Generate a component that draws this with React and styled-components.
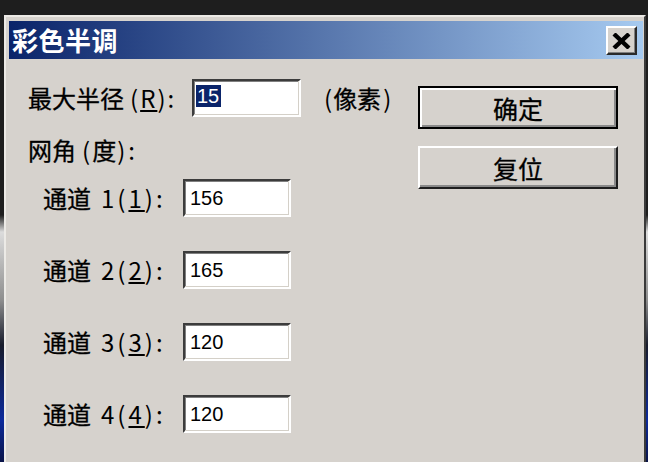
import React from "react";
import styled, { createGlobalStyle, css } from "styled-components";

const Global = createGlobalStyle`
  html, body {
    margin: 0;
    padding: 0;
    width: 648px;
    height: 462px;
    overflow: hidden;
  }
  body {
    background: linear-gradient(
      to bottom,
      #1e1e1e 0,
      #1e1e1e 215px,
      #dcdcdc 232px,
      #8e8e8e 300px,
      #181c2c 345px,
      #0c2a9c 420px,
      #0a1448 462px
    );
    font-family: "Noto Sans CJK SC", "Liberation Sans", sans-serif;
  }
`;

const Dialog = styled.div`
  box-sizing: border-box;
  margin: 15px 0 0 4px;
  width: 642px;
  height: 460px;
  background: #d6d2cd;
  border-top: 2px solid #eceae6;
  border-left: 2px solid #eceae6;
  border-right: 2px solid #3a3a3a;
  padding: 4px 1px 0 3px;
  display: flex;
  flex-direction: column;
`;

const TitleBar = styled.div`
  flex: none;
  height: 38px;
  background: linear-gradient(to right, #0a246a, #a6caf0);
  display: flex;
  align-items: center;
  justify-content: space-between;
  padding: 0 6px 0 3px;
`;

const Title = styled.div`
  color: #fff;
  font-family: "Noto Sans CJK SC", sans-serif;
  font-weight: 700;
  font-size: 26px;
  line-height: 30px;
  letter-spacing: 0.5px;
`;

const CloseButton = styled.button`
  box-sizing: border-box;
  width: 31px;
  height: 29px;
  padding: 0;
  margin-top: 1px;
  background: #d6d2cd;
  border: 2px solid;
  border-color: #ffffff #2a2a2a #2a2a2a #ffffff;
  box-shadow: inset -1px -1px 0 #808080;
  display: flex;
  align-items: center;
  justify-content: center;
`;

const Content = styled.div`
  flex: 1;
  display: flex;
`;

const LeftColumn = styled.div`
  box-sizing: border-box;
  width: 409px;
  padding: 20px 0 0 19px;
  display: flex;
  flex-direction: column;
`;

const FieldRow = styled.div`
  display: flex;
  align-items: center;
  padding-left: ${(p) => p.$indent || 0}px;
  margin-top: ${(p) => p.$gap || 0}px;
`;

const Label = styled.div`
  flex: none;
  width: ${(p) => (p.$width ? `${p.$width}px` : "auto")};
  margin-left: ${(p) => p.$offset || 0}px;
  font-size: 24px;
  font-weight: 400;
  line-height: 26px;
  color: #000;
  white-space: nowrap;
  -webkit-text-stroke: 0.3px #000;
`;

const Suffix = styled.span`
  margin-left: ${(p) => p.$space}px;
  letter-spacing: ${(p) => p.$spacing}px;
  -webkit-text-stroke: 0;
`;

const Heading = styled.div`
  margin-top: 20px;
  font-size: 24px;
  font-weight: 400;
  line-height: 26px;
  color: #000;
  white-space: nowrap;
  -webkit-text-stroke: 0.3px #000;
`;

const TextBox = styled.div`
  box-sizing: border-box;
  flex: none;
  width: ${(p) => p.$width}px;
  height: 38px;
  background: #fff;
  border: 2px solid;
  border-color: #3c3c3c #ffffff #ffffff #3c3c3c;
  box-shadow: inset -1px -1px 0 #d4d0c8, inset 1px 1px 0 #808080;
  display: flex;
  align-items: center;
  padding-left: ${(p) => p.$pad}px;
  font-family: "Liberation Sans", Arial, sans-serif;
  font-size: 20px;
  color: #000;
`;

const Selected = styled.span`
  background: #0a246a;
  color: #fff;
  line-height: 22px;
  padding: 0 2px 0 1px;
  margin-top: -5px;
`;

const RightColumn = styled.div`
  display: flex;
  flex-direction: column;
  gap: 17px;
  padding-top: 27px;
`;

const PushButton = styled.button`
  box-sizing: border-box;
  width: 200px;
  height: 43px;
  padding: 0;
  background: #d6d2cd;
  font-family: "Noto Sans CJK SC", sans-serif;
  font-size: 25px;
  font-weight: 400;
  line-height: 30px;
  color: #000;
  -webkit-text-stroke: 0.3px #000;
  border: 2px solid;
  border-color: #ffffff #1e1e1e #1e1e1e #ffffff;
  box-shadow: inset -2px -2px 0 #8a8a8a;
  ${(p) =>
    p.$default &&
    css`
      border-color: #000;
      box-shadow: inset 2px 2px 0 #ffffff, inset -2px -2px 0 #8a8a8a;
    `}
`;

const CloseGlyph = () => (
  <svg width="19" height="16" viewBox="0 0 19 16">
    <path d="M2 1 L17 15 M17 1 L2 15" stroke="#000" strokeWidth="4.4" fill="none" />
  </svg>
);

const channels = [
  { n: "1", value: "156" },
  { n: "2", value: "165" },
  { n: "3", value: "120" },
  { n: "4", value: "120" },
];

export default function App() {
  return (
    <>
      <Global />
      <Dialog>
        <TitleBar>
          <Title>彩色半调</Title>
          <CloseButton aria-label="关闭">
            <CloseGlyph />
          </CloseButton>
        </TitleBar>
        <Content>
          <LeftColumn>
            <FieldRow>
              <Label $width={164}>
                最大半径
                <Suffix $space={6} $spacing={2}>
                  (<u>R</u>):
                </Suffix>
              </Label>
              <TextBox $width={109} $pad={2}>
                <Selected>15</Selected>
              </TextBox>
              <Label $offset={23}>
                <Suffix $space={0} $spacing={1}>(</Suffix>像素<Suffix $space={2} $spacing={0}>)</Suffix>
              </Label>
            </FieldRow>
            <Heading>
              网角<Suffix $space={6} $spacing={2}>(</Suffix>度<Suffix $space={1} $spacing={3}>):</Suffix>
            </Heading>
            {channels.map((c, i) => (
              <FieldRow key={i} $indent={15} $gap={i === 0 ? 16 : 34}>
                <Label $width={140}>
                  通道
                  <Suffix $space={10} $spacing={3}>
                    {c.n}(<u>{c.n}</u>):
                  </Suffix>
                </Label>
                <TextBox $width={108} $pad={5}>
                  {c.value}
                </TextBox>
              </FieldRow>
            ))}
          </LeftColumn>
          <RightColumn>
            <PushButton $default>确定</PushButton>
            <PushButton>复位</PushButton>
          </RightColumn>
        </Content>
      </Dialog>
    </>
  );
}
